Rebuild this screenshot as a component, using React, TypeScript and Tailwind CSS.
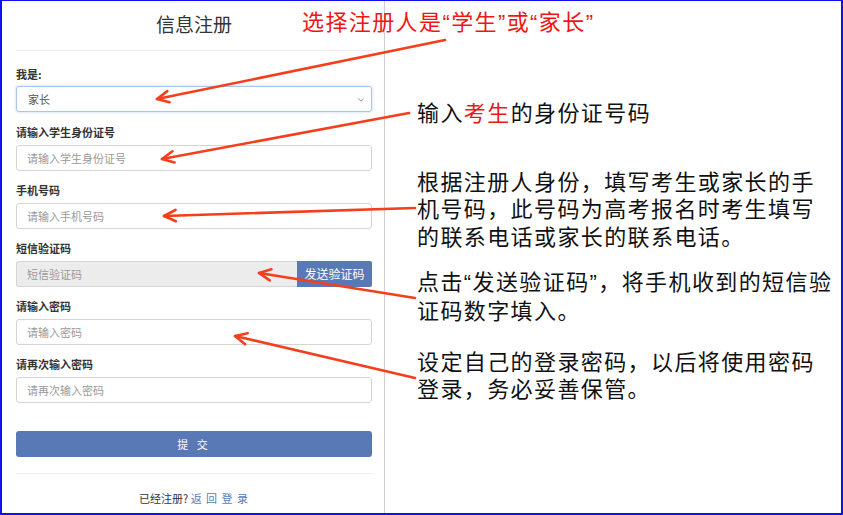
import { ChevronDown } from 'lucide-react';

const CJK = '"Noto Sans CJK SC", "Noto Sans", sans-serif';
const LATIN = '"Liberation Sans", "Noto Sans CJK SC", sans-serif';

// annotation arrows: [fromX, fromY, tipX, tipY]
const ARROWS: [number, number, number, number][] = [
  [443, 39, 155, 98],
  [407, 112, 160, 158],
  [413, 207, 162, 215],
  [413, 297, 257, 272],
  [413, 377, 233, 335],
];

function head(x1: number, y1: number, x2: number, y2: number) {
  const a = Math.atan2(y1 - y2, x1 - x2);
  const len = 13;
  const s = 0.45;
  const p1 = [x2 + len * Math.cos(a + s), y2 + len * Math.sin(a + s)];
  const p2 = [x2 + len * Math.cos(a - s), y2 + len * Math.sin(a - s)];
  return `M${p1[0]} ${p1[1]} L${x2} ${y2} L${p2[0]} ${p2[1]}`;
}

function Field({ label, placeholder }: { label: string; placeholder: string }) {
  return (
    <div className="mb-[12px]">
      <div className="h-[14px] text-[11px] leading-[14px] font-bold text-[#333] mb-[6px]">{label}</div>
      <input
        readOnly
        placeholder={placeholder}
        className="block w-full h-[26px] border border-[#d4d4d4] rounded-[3px] px-[10px] text-[11px] bg-white placeholder:text-[#9a9a9a] outline-none"
      />
    </div>
  );
}

function Quote({ children }: { children: string }) {
  return <span style={{ fontFamily: LATIN }}>{children}</span>;
}

export default function App() {
  return (
    <div
      className="relative w-[843px] h-[515px] bg-white border-2 border-t border-[#1010f0] flex overflow-hidden"
      style={{ fontFamily: CJK }}
    >
      {/* form */}
      <div className="w-[383px] shrink-0 border-r border-[#cfcfcf] pl-[14px] pr-[12px]">
        <h1 className="mt-[9px] h-[28px] text-center text-[19px] leading-[28px] text-[#333] font-normal">信息注册</h1>
        <div className="mt-[12px] border-t border-[#ebebeb]" />

        <div className="mt-[16px] mb-[13px]">
          <div className="h-[14px] text-[11px] leading-[14px] font-bold text-[#333] mb-[5px]">我是:</div>
          <div className="relative h-[26px] border border-[#a9c5f0] rounded-[3px] shadow-[0_0_3px_rgba(102,150,233,0.45)] flex items-center px-[11px] text-[11px] text-[#555]">
            家长
            <ChevronDown className="absolute right-[5px] top-[8px] h-[10px] w-[10px] text-[#555]" strokeWidth={1.6} />
          </div>
        </div>

        <Field label="请输入学生身份证号" placeholder="请输入学生身份证号" />
        <Field label="手机号码" placeholder="请输入手机号码" />

        <div className="mb-[12px]">
          <div className="h-[14px] text-[11px] leading-[14px] font-bold text-[#333] mb-[6px]">短信验证码</div>
          <div className="flex h-[26px]">
            <div className="flex-1 border border-[#d4d4d4] border-r-0 rounded-l-[3px] bg-[#ececec] px-[10px] text-[11px] leading-[24px] text-[#9a9a9a]">
              短信验证码
            </div>
            <button className="w-[75px] bg-[#5879b5] text-white text-[12px] rounded-r-[2px]">发送验证码</button>
          </div>
        </div>

        <Field label="请输入密码" placeholder="请输入密码" />
        <Field label="请再次输入密码" placeholder="请再次输入密码" />

        <button className="mt-[16px] w-full h-[26px] bg-[#5879b5] rounded-[3px] text-white text-[11px] tracking-[3px]">
          提 交
        </button>
        <div className="mt-[16px] border-t border-[#ededed]" />
        <div className="mt-[16px] text-center text-[11px] text-[#333]">
          已经注册? <span className="text-[#5a7ab8] tracking-[1px]">返 回 登 录</span>
        </div>
      </div>

      {/* notes */}
      <div className="flex-1 pl-[32px] text-[22px] leading-[27.5px] tracking-[1.4px] text-[#111]">
        <p className="mt-[97px]">
          输入<span className="text-[#e8191b]">考生</span>的身份证号码
        </p>
        <p className="mt-[41px]">
          根据注册人身份，填写考生或家长的手
          <br />
          机号码，此号码为高考报名时考生填写
          <br />
          的联系电话或家长的联系电话。
        </p>
        <p className="mt-[18px] leading-[27px]">
          点击<Quote>“</Quote>发送验证码<Quote>”</Quote>，将手机收到的短信验
          <br />
          证码数字填入。
        </p>
        <p className="mt-[24px] leading-[27px]">
          设定自己的登录密码，以后将使用密码
          <br />
          登录，务必妥善保管。
        </p>
      </div>

      <div className="absolute left-[300px] top-[5px] text-[22px] leading-[28px] tracking-[1.4px] text-[#f01414]">
        选择注册人是<Quote>“</Quote>学生<Quote>”</Quote>或<Quote>“</Quote>家长<Quote>”</Quote>
      </div>

      <svg className="absolute left-0 top-0 pointer-events-none" width={843} height={515}>
        {ARROWS.map(([x1, y1, x2, y2], i) => (
          <g key={i} stroke="#f43f1c" strokeWidth={2.6} fill="none" strokeLinecap="round" strokeLinejoin="round">
            <line x1={x1} y1={y1} x2={x2} y2={y2} />
            <path d={head(x1, y1, x2, y2)} />
          </g>
        ))}
      </svg>
    </div>
  );
}
